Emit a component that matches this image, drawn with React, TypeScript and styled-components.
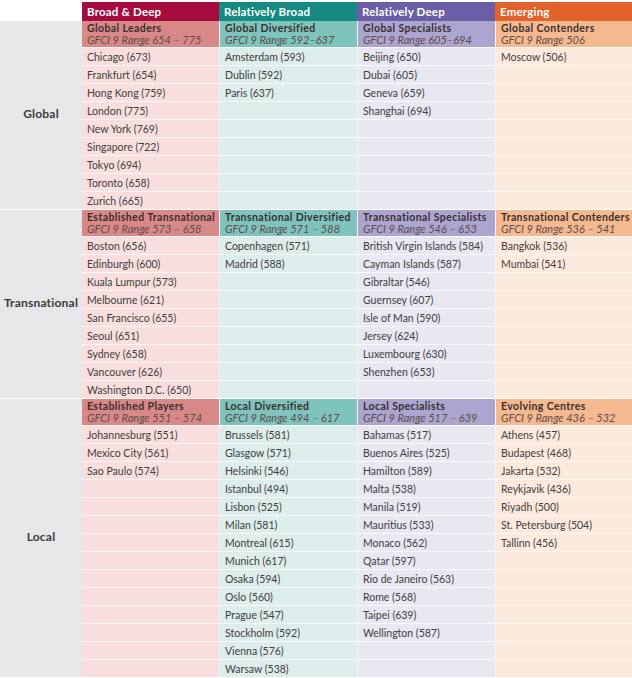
import React from "react";
import styled, { createGlobalStyle } from "styled-components";

const Global = createGlobalStyle`
  html, body { margin: 0; padding: 0; background: #ffffff; }
  body { font-family: Lato, "Open Sans", sans-serif; overflow: hidden; }
`;

type Cat = 0 | 1 | 2 | 3;

const HEAD = ["#a50b3c", "#168a80", "#6c5ea6", "#e3612b"];
const SUB = ["#d98888", "#7fc3bd", "#aca5cf", "#f5b990"];
const BODY = ["#f8dfde", "#dcedeb", "#e9e7f1", "#fdeadd"];
const WIDTHS = "82px 137px 138px 138px 137px";

const Page = styled.div`
  width: 632px;
  padding-top: 2px;
  overflow: hidden;
`;

const HeaderRow = styled.div`
  display: grid;
  grid-template-columns: ${WIDTHS};
  height: 19px;
`;

const Blank = styled.div``;

const HeadCell = styled.div<{ $c: Cat }>`
  background: ${(p) => HEAD[p.$c]};
  color: #ffffff;
  font-weight: 700;
  font-size: 11.5px;
  letter-spacing: 0.2px;
  padding-left: 5px;
  display: flex;
  align-items: center;
  white-space: nowrap;
`;

const Section = styled.div`
  display: grid;
  grid-template-columns: ${WIDTHS};
  border-bottom: 1px solid #ffffff;
  &:last-child { border-bottom: none; }
`;

const Label = styled.div`
  background: #e6e7e9;
  color: #3b3b3b;
  font-weight: 700;
  font-size: 12px;
  letter-spacing: 0.2px;
  display: flex;
  align-items: center;
  justify-content: center;
  padding-bottom: 3px;
`;

const Column = styled.div<{ $c: Cat }>`
  background: ${(p) => BODY[p.$c]};
  display: flex;
  flex-direction: column;
  min-width: 0;
  border-left: ${(p) => (p.$c === 0 ? "none" : "1px solid rgba(255,255,255,0.45)")};
`;

const Sub = styled.div<{ $c: Cat }>`
  background: ${(p) => SUB[p.$c]};
  height: 26px;
  box-sizing: border-box;
  padding: 0 0 0 5px;
  display: flex;
  flex-direction: column;
  justify-content: center;
  white-space: nowrap;
  overflow: visible;
  position: relative;
  z-index: 1;
`;

const SubTitle = styled.div`
  font-weight: 700;
  font-size: 10.5px;
  color: #3a2f30;
  line-height: 11px;
  letter-spacing: 0.4px;
`;

const SubRange = styled.div`
  font-style: italic;
  font-size: 11px;
  color: #5d4c4c;
  line-height: 12px;
`;

const Row = styled.div`
  height: 18px;
  box-sizing: border-box;
  border-top: 1px solid rgba(255, 255, 255, 0.75);
  padding-left: 5px;
  font-size: 10.5px;
  color: #404040;
  display: flex;
  align-items: center;
  white-space: nowrap;
`;

type Block = { title: string; range: string; items: string[] };
type Sect = { label: string; rows: number; blocks: Block[] };

const sections: Sect[] = [
  {
    label: "Global",
    rows: 9,
    blocks: [
      {
        title: "Global Leaders",
        range: "GFCI 9 Range 654 – 775",
        items: ["Chicago (673)", "Frankfurt (654)", "Hong Kong (759)", "London (775)", "New York (769)", "Singapore (722)", "Tokyo (694)", "Toronto (658)", "Zurich (665)"],
      },
      { title: "Global Diversified", range: "GFCI 9 Range 592–637", items: ["Amsterdam (593)", "Dublin (592)", "Paris (637)"] },
      { title: "Global Specialists", range: "GFCI 9 Range 605–694", items: ["Beijing (650)", "Dubai (605)", "Geneva (659)", "Shanghai (694)"] },
      { title: "Global Contenders", range: "GFCI 9 Range 506", items: ["Moscow (506)"] },
    ],
  },
  {
    label: "Transnational",
    rows: 9,
    blocks: [
      {
        title: "Established Transnational",
        range: "GFCI 9 Range 573 – 658",
        items: ["Boston (656)", "Edinburgh (600)", "Kuala Lumpur (573)", "Melbourne (621)", "San Francisco (655)", "Seoul (651)", "Sydney (658)", "Vancouver (626)", "Washington D.C. (650)"],
      },
      { title: "Transnational Diversified", range: "GFCI 9 Range 571 – 588", items: ["Copenhagen (571)", "Madrid (588)"] },
      {
        title: "Transnational Specialists",
        range: "GFCI 9 Range 546 – 653",
        items: ["British Virgin Islands (584)", "Cayman Islands (587)", "Gibraltar (546)", "Guernsey (607)", "Isle of Man (590)", "Jersey (624)", "Luxembourg (630)", "Shenzhen (653)"],
      },
      { title: "Transnational Contenders", range: "GFCI 9 Range 536 – 541", items: ["Bangkok (536)", "Mumbai (541)"] },
    ],
  },
  {
    label: "Local",
    rows: 14,
    blocks: [
      { title: "Established Players", range: "GFCI 9 Range 551 – 574", items: ["Johannesburg (551)", "Mexico City (561)", "Sao Paulo (574)"] },
      {
        title: "Local Diversified",
        range: "GFCI 9 Range 494 – 617",
        items: ["Brussels (581)", "Glasgow (571)", "Helsinki (546)", "Istanbul (494)", "Lisbon (525)", "Milan (581)", "Montreal (615)", "Munich (617)", "Osaka (594)", "Oslo (560)", "Prague (547)", "Stockholm (592)", "Vienna (576)", "Warsaw (538)"],
      },
      {
        title: "Local Specialists",
        range: "GFCI 9 Range 517 – 639",
        items: ["Bahamas (517)", "Buenos Aires (525)", "Hamilton (589)", "Malta (538)", "Manila (519)", "Mauritius (533)", "Monaco (562)", "Qatar (597)", "Rio de Janeiro (563)", "Rome (568)", "Taipei (639)", "Wellington (587)"],
      },
      {
        title: "Evolving Centres",
        range: "GFCI 9 Range 436 – 532",
        items: ["Athens (457)", "Budapest (468)", "Jakarta (532)", "Reykjavik (436)", "Riyadh (500)", "St. Petersburg (504)", "Tallinn (456)"],
      },
    ],
  },
];

const heads = ["Broad & Deep", "Relatively Broad", "Relatively Deep", "Emerging"];

export default function App() {
  return (
    <>
      <Global />
      <Page>
        <HeaderRow>
          <Blank />
          {heads.map((h, i) => (
            <HeadCell key={h} $c={i as Cat}>
              {h}
            </HeadCell>
          ))}
        </HeaderRow>
        {sections.map((s) => (
          <Section key={s.label}>
            <Label>{s.label}</Label>
            {s.blocks.map((b, i) => (
              <Column key={b.title} $c={i as Cat}>
                <Sub $c={i as Cat}>
                  <SubTitle>{b.title}</SubTitle>
                  <SubRange>{b.range}</SubRange>
                </Sub>
                {Array.from({ length: s.rows }).map((_, r) => (
                  <Row key={r}>{b.items[r] ?? ""}</Row>
                ))}
              </Column>
            ))}
          </Section>
        ))}
      </Page>
    </>
  );
}
